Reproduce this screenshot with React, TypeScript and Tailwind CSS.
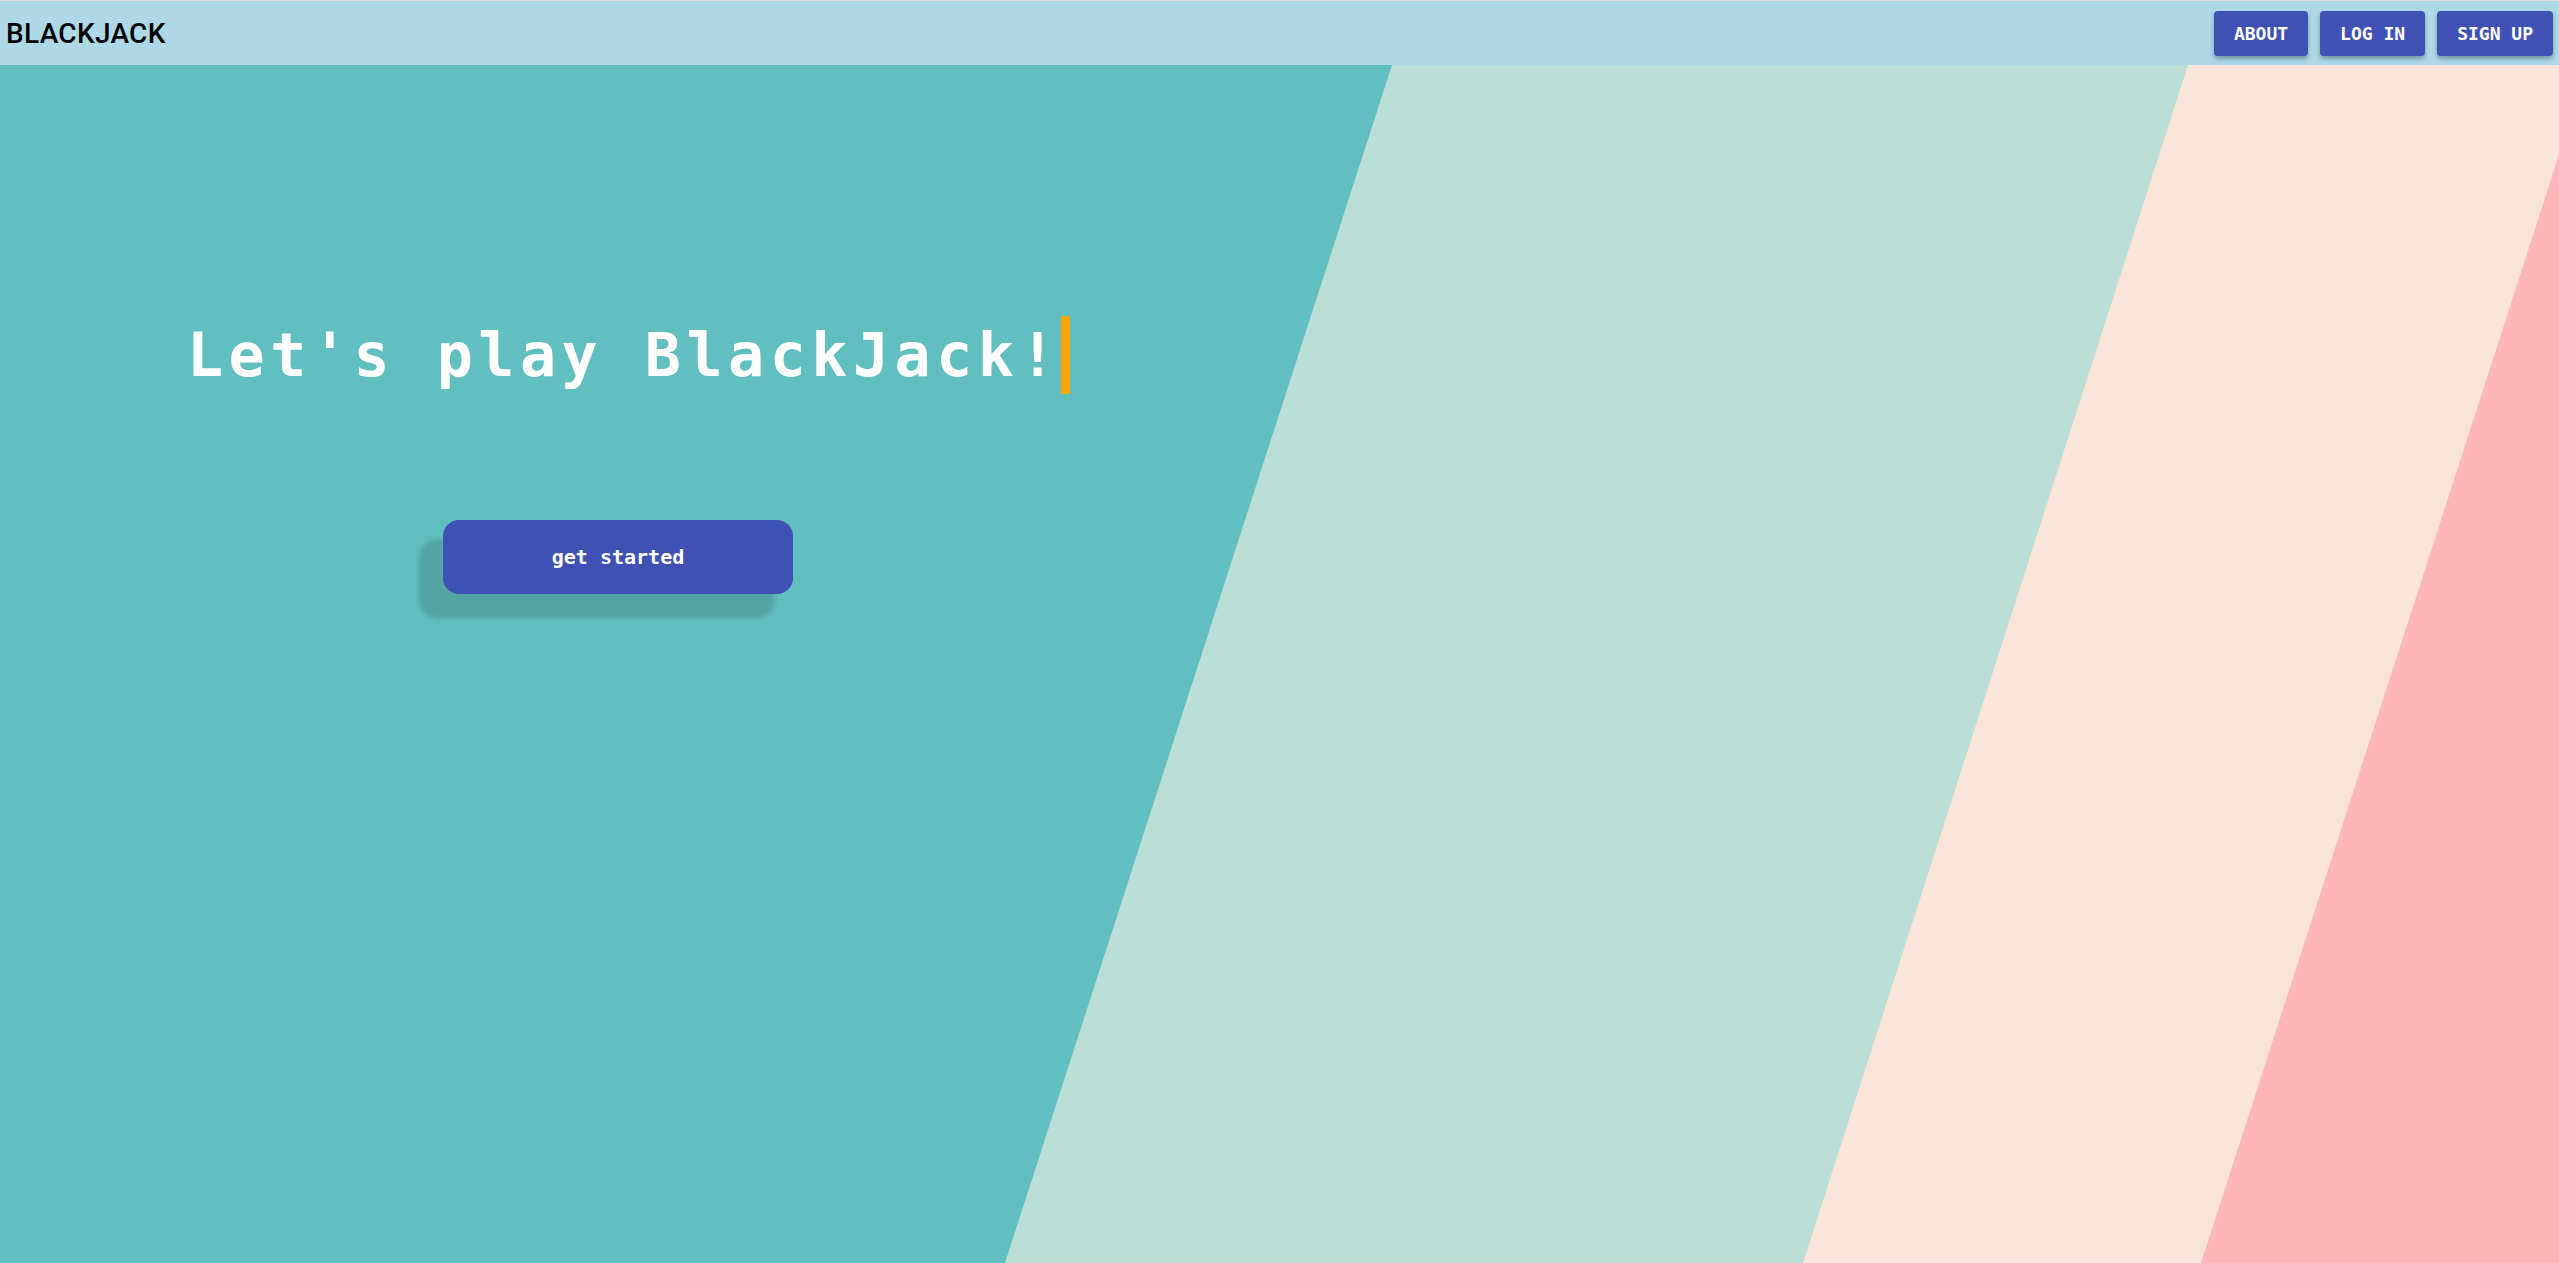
import React from 'react';

const mono = "font-['DejaVu_Sans_Mono','Liberation_Mono',monospace]";

const NavButton: React.FC<{ label: string }> = ({ label }) => (
  <button
    className={`${mono} h-[45px] px-[20px] rounded-[4px] bg-[#3f51b5] text-white text-[18px] font-bold uppercase shadow-[0_3px_4px_rgba(0,0,0,0.3)]`}
  >
    {label}
  </button>
);

const Stripes: React.FC = () => (
  <svg
    className="absolute inset-0 w-full h-full"
    viewBox="0 0 2559 1198"
    preserveAspectRatio="none"
  >
    <rect x="0" y="0" width="2559" height="1198" fill="#61c0bf" />
    <polygon points="1392,0 2559,0 2559,1198 1005,1198" fill="#bbded6" />
    <polygon points="2188,0 2559,0 2559,1198 1803,1198" fill="#fae3d9" />
    <polygon points="2588,0 2700,0 2700,1198 2201,1198" fill="#ffb6b9" />
  </svg>
);

const App: React.FC = () => {
  return (
    <div className="w-full h-screen flex flex-col overflow-hidden border-t border-[#dcdcdc]">
      <nav className="h-[64px] shrink-0 bg-[#add8e6] flex items-center justify-between pl-[6px] pr-[6px]">
        <span className="font-['Roboto',sans-serif] font-medium text-[28px] leading-none text-black tracking-[0.3px] pt-[2px]">
          BLACKJACK
        </span>
        <div className="flex items-center gap-[12px] pt-[1px]">
          {["About", "Log in", "Sign up"].map((item) => (
            <NavButton key={item} label={item} />
          ))}
        </div>
      </nav>
      <main className="relative flex-1 overflow-hidden">
        <Stripes />
        <div className="relative flex flex-col items-start">
          <h1
            className={`${mono} ml-[187px] mt-[251px] text-[60px] leading-[78px] font-bold text-white tracking-[5.5px] border-r-[9px] border-[#ffa500] whitespace-nowrap`}
          >
            Let's play BlackJack!
          </h1>
          <button
            className={`${mono} ml-[443px] mt-[126px] w-[350px] h-[74px] rounded-[16px] bg-[#3f51b5] text-white text-[20px] font-bold shadow-[-21px_22px_5px_3px_rgba(0,0,0,0.14)]`}
          >
            get started
          </button>
        </div>
      </main>
    </div>
  );
};

export default App;
